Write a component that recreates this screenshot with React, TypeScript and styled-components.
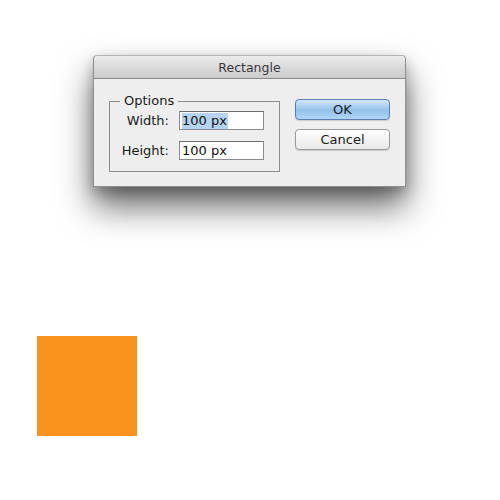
import React from "react";
import styled, { createGlobalStyle } from "styled-components";

const GlobalStyle = createGlobalStyle`
  body {
    margin: 0;
    background: #ffffff;
    font-family: "DejaVu Sans", "Liberation Sans", sans-serif;
  }
`;

const Page = styled.div`
  width: 500px;
  height: 500px;
  display: flex;
  flex-direction: column;
  overflow: hidden;
`;

const Dialog = styled.div`
  margin: 55px 0 0 93px;
  width: 313px;
  height: 132px;
  display: flex;
  flex-direction: column;
  background: #eeeeee;
  border: 1px solid #8e8e8e;
  border-top-color: #b4b4b4;
  border-radius: 4px 4px 0 0;
  box-sizing: border-box;
  box-shadow: 0 20px 34px rgba(0, 0, 0, 0.58), 0 6px 14px rgba(0, 0, 0, 0.25);
`;

const TitleBar = styled.div`
  height: 22px;
  display: flex;
  align-items: center;
  justify-content: center;
  background: linear-gradient(#ebebeb, #cbcbcb);
  border-bottom: 1px solid #8a8a8a;
  border-radius: 4px 4px 0 0;
  font-size: 12.5px;
  color: #3a3a3a;
`;

const Body = styled.div`
  flex: 1;
  display: flex;
  padding: 16px 15px 0 15px;
  gap: 15px;
`;

const Group = styled.fieldset`
  margin: 0;
  padding: 4px 0 0 13px;
  width: 172px;
  height: 77px;
  box-sizing: border-box;
  border: 1px solid #8c8c8c;
  display: flex;
  flex-direction: column;
  gap: 11px;
`;

const Legend = styled.legend`
  padding: 0 4px;
  margin-left: -3px;
  font-size: 13px;
  color: #1a1a1a;
  line-height: 12px;
`;

const Row = styled.div`
  display: flex;
  align-items: center;
  gap: 10px;
`;

const Label = styled.span`
  width: 46px;
  font-size: 13px;
  color: #1a1a1a;
  white-space: nowrap;
  display: flex;
  justify-content: flex-end;
`;

const Field = styled.div`
  width: 85px;
  height: 19px;
  box-sizing: border-box;
  border: 1px solid #8a8a8a;
  border-top-color: #6e6e6e;
  background: #ffffff;
  display: flex;
  align-items: center;
  padding-left: 2px;
  font-size: 13px;
  color: #111;
`;

const Selected = styled.span<{ $on?: boolean }>`
  background: ${(p) => (p.$on ? "#b5d3f3" : "transparent")};
  padding-right: 1px;
  line-height: 16px;
`;

const Buttons = styled.div`
  display: flex;
  flex-direction: column;
  gap: 9px;
  margin-top: 4px;
`;

const Button = styled.div<{ $primary?: boolean }>`
  width: 95px;
  height: 21px;
  box-sizing: border-box;
  border-radius: 4px;
  border: 1px solid ${(p) => (p.$primary ? "#5a7fb3" : "#9a9a9a")};
  background: ${(p) =>
    p.$primary
      ? "linear-gradient(#d3e7fa, #93c1ec 55%, #b0d6f5)"
      : "linear-gradient(#ffffff, #f2f2f2 55%, #e9e9e9)"};
  display: flex;
  align-items: center;
  justify-content: center;
  font-size: 13px;
  color: #1a1a1a;
  box-shadow: 0 1px 1px rgba(0, 0, 0, 0.15);
`;

const Swatch = styled.div`
  margin: 149px 0 0 37px;
  width: 100px;
  height: 100px;
  background: #f7931e;
`;

export default function App() {
  return (
    <Page>
      <GlobalStyle />
      <Dialog>
        <TitleBar>Rectangle</TitleBar>
        <Body>
          <Group>
            <Legend>Options</Legend>
            <Row>
              <Label>Width:</Label>
              <Field>
                <Selected $on>100 px</Selected>
              </Field>
            </Row>
            <Row>
              <Label>Height:</Label>
              <Field>
                <Selected>100 px</Selected>
              </Field>
            </Row>
          </Group>
          <Buttons>
            <Button $primary>OK</Button>
            <Button>Cancel</Button>
          </Buttons>
        </Body>
      </Dialog>
      <Swatch />
    </Page>
  );
}
